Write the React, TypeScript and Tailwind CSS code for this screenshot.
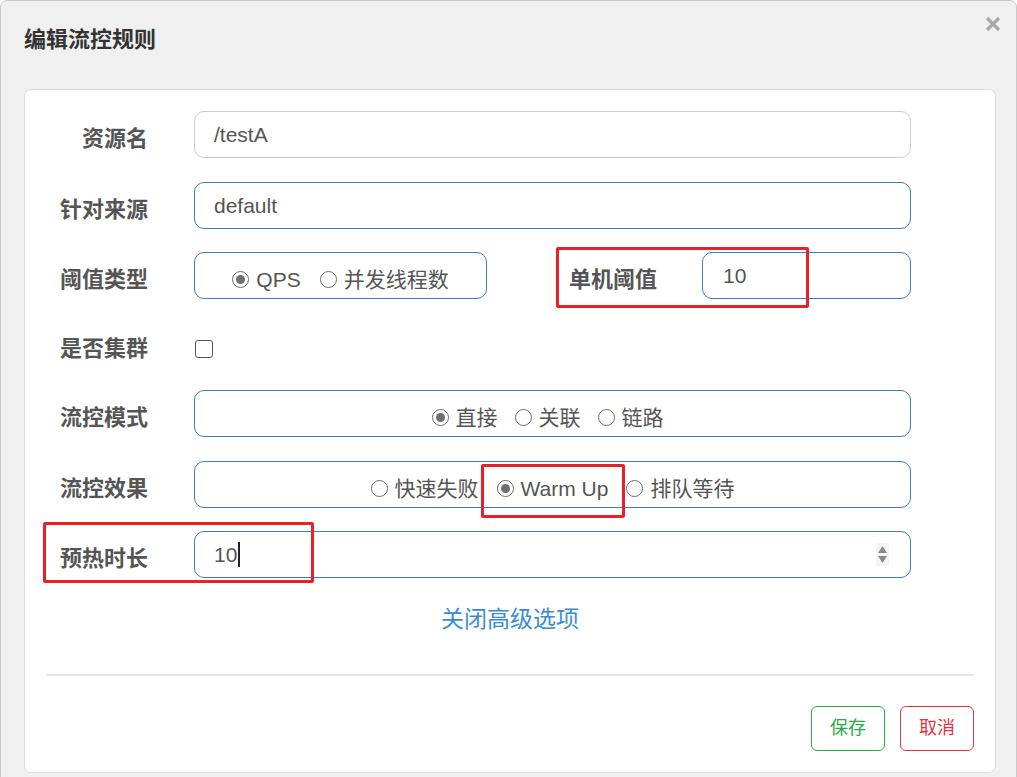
import React from 'react';

// ─── Bits ─────────────────────────────────────────────────────────────────────

function Radio({ label, checked = false }: { label: string; checked?: boolean }) {
  return (
    <span className="flex items-center">
      <span className="w-[17px] h-[17px] rounded-full border-[1.5px] border-[#6b6b6b] bg-white flex items-center justify-center">
        {checked && <span className="w-[9px] h-[9px] rounded-full bg-[#6f6f6f]" />}
      </span>
      <span className="ml-[7px] text-[21px] leading-[28px] text-[#555]">{label}</span>
    </span>
  );
}

function Label({ children, className = '' }: { children: React.ReactNode; className?: string }) {
  return (
    <div className={`pt-[9px] text-right text-[22px] leading-[30px] font-bold text-[#555] ${className}`}>
      {children}
    </div>
  );
}

function Row({ label, children }: { label: string; children: React.ReactNode }) {
  return (
    <div className="flex items-center h-[47px]">
      <Label className="w-[123px] shrink-0">{label}</Label>
      <div className="ml-[46px] flex items-center">{children}</div>
    </div>
  );
}

const INPUT = 'h-[47px] rounded-[10px] border border-[#3d7fc1] bg-white flex items-center pl-[19px] text-[21px] text-[#555]';
const GROUP = 'h-[47px] rounded-[10px] border border-[#3d7fc1] flex items-center justify-center pt-[8px]';

// ─── Page ─────────────────────────────────────────────────────────────────────

export default function App() {
  return (
    <div className="relative w-[1017px] h-[777px] overflow-hidden bg-white font-['Liberation_Sans','Noto_Sans_CJK_SC',sans-serif]">
      <div className="w-[1017px] h-[800px] bg-[#f0f0f0] border border-[#c9c9c9] rounded-t-[7px]">

        {/* ── Header ── */}
        <div className="h-[88px] flex justify-between pl-[23px] pr-[15px]">
          <h1 className="pt-[26px] text-[22px] leading-[26px] font-bold text-[#333]">编辑流控规则</h1>
          <svg width="16" height="16" viewBox="0 0 16 16" className="mt-[15px]">
            <path d="M2 2 L14 14 M14 2 L2 14" stroke="#a9a9a9" strokeWidth="3.2" />
          </svg>
        </div>

        {/* ── Card ── */}
        <div className="ml-[23px] w-[972px] h-[684px] bg-white border border-[#dcdcdc] rounded-[7px] pt-[21px] flex flex-col">

          <Row label="资源名">
            <div className={`${INPUT} w-[717px] bg-[#eeeeee] border-[#cccccc]`}>/testA</div>
          </Row>

          <div className="mt-[24px]">
            <Row label="针对来源">
              <div className={`${INPUT} w-[717px]`}>default</div>
            </Row>
          </div>

          <div className="mt-[23px]">
            <Row label="阈值类型">
              <div className={`${GROUP} w-[293px] gap-[19px]`}>
                <Radio label="QPS" checked />
                <Radio label="并发线程数" />
              </div>
              <Label className="w-[215px] pr-[45px]">单机阈值</Label>
              <div className={`${INPUT} w-[209px] pl-[20px]`}>10</div>
            </Row>
          </div>

          <div className="mt-[23px] flex items-center h-[45px]">
            <Label className="w-[123px] shrink-0">是否集群</Label>
            <span className="ml-[47px] mt-[9px] w-[18px] h-[18px] rounded-[3px] border-[1.5px] border-[#555] bg-white" />
          </div>

          <div className="mt-[23px]">
            <Row label="流控模式">
              <div className={`${GROUP} w-[717px] gap-[17px] pr-[10px]`}>
                <Radio label="直接" checked />
                <Radio label="关联" />
                <Radio label="链路" />
              </div>
            </Row>
          </div>

          <div className="mt-[24px]">
            <Row label="流控效果">
              <div className={`${GROUP} w-[717px] gap-[18px]`}>
                <Radio label="快速失败" />
                <Radio label="Warm Up" checked />
                <Radio label="排队等待" />
              </div>
            </Row>
          </div>

          <div className="mt-[23px]">
            <Row label="预热时长">
              <div className={`${INPUT} w-[717px] pr-[21px] justify-between`}>
                <span className="flex items-center">
                  10
                  <span className="ml-[1px] w-[2px] h-[25px] bg-[#222]" />
                </span>
                <span className="w-[13px] h-[23px] bg-[#f4f4f4] flex flex-col items-center justify-center gap-[3px]">
                  <svg width="9" height="7" viewBox="0 0 9 7"><path d="M4.5 0 L9 7 L0 7 Z" fill="#8a8a8a" /></svg>
                  <svg width="9" height="7" viewBox="0 0 9 7"><path d="M0 0 L9 0 L4.5 7 Z" fill="#8a8a8a" /></svg>
                </span>
              </div>
            </Row>
          </div>

          {/* ── Advanced toggle ── */}
          <div className="mt-[26px] text-center text-[23px] leading-[30px] text-[#3b8bd2]">关闭高级选项</div>

          <div className="mt-[40px] ml-[22px] w-[927px] h-[2px] bg-[#e6e6e6]" />

          {/* ── Footer ── */}
          <div className="mt-[30px] ml-[22px] w-[927px] flex justify-end gap-[15px]">
            <button className="w-[74px] h-[45px] rounded-[6px] border border-[#2aa84a] text-[#2aa84a] text-[18px] bg-white">保存</button>
            <button className="w-[74px] h-[45px] rounded-[6px] border border-[#dc3545] text-[#dc3545] text-[18px] bg-white">取消</button>
          </div>
        </div>
      </div>

      {/* ── Annotations ── */}
      <div className="absolute left-[556px] top-[247px] w-[253px] h-[61px] border-[3px] border-[#e8202a] rounded-[2px]" />
      <div className="absolute left-[481px] top-[464px] w-[144px] h-[54px] border-[3px] border-[#e8202a] rounded-[2px]" />
      <div className="absolute left-[43px] top-[522px] w-[271px] h-[61px] border-[3px] border-[#e8202a] rounded-[2px]" />
    </div>
  );
}
